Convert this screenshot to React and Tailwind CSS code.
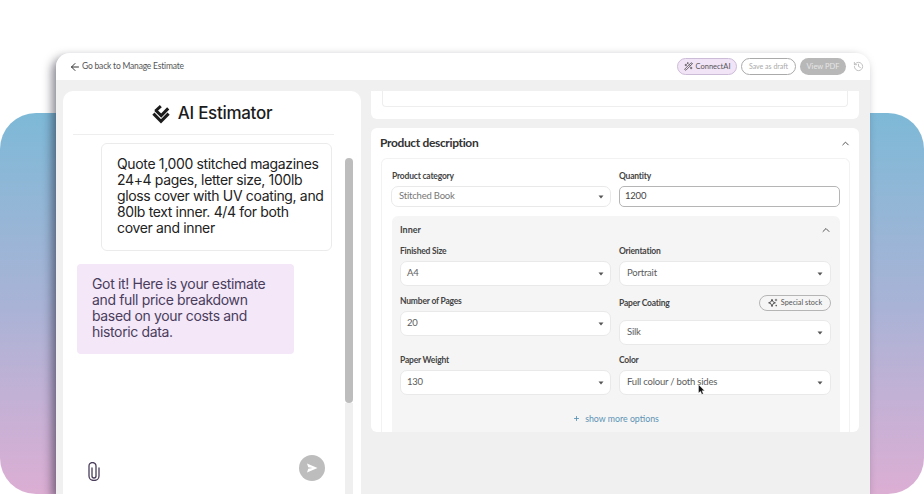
import React from "react";
import { ArrowLeft, ChevronUp, History, Plus, WandSparkles } from "lucide-react";

const Caret = () => (
  <svg width="6" height="4" viewBox="0 0 6 4" className="shrink-0">
    <path d="M0.5 0.5h5L3 3.5z" fill="#555" />
  </svg>
);

const Label = ({ children, className = "" }) => (
  <div className={`text-[8.5px] tracking-[-0.2px] leading-[11px] font-bold text-[#444] ${className}`}>{children}</div>
);

const Select = ({ value, className = "" }) => (
  <div className={`flex items-center justify-between bg-white rounded-[7px] border border-[#e9e9e9] text-[9.5px] tracking-[-0.2px] text-[#5c5c5c] ${className}`}>
    <span>{value}</span>
    <Caret />
  </div>
);

const Logo = () => (
  <svg width="20" height="20" viewBox="0 0 20 20" fill="none" stroke="#1c1c1c" strokeWidth="3">
    <path d="M2.4 9.6 10 17.4 17.6 9.6" />
    <path d="M4.4 7 9.8 2.2" />
    <path d="M4.4 6 10.2 11.6 17.2 4.4" />
  </svg>
);

const Sparkle = () => (
  <svg width="10" height="10" viewBox="0 0 10 10" fill="#555">
    <path d="M4 1.2 5 3.8 7.4 4.8 5 5.8 4 8.6 3 5.8 0.6 4.8 3 3.8z" fill="none" stroke="#555" strokeWidth="1" />
    <path d="M8 0.6 8.5 1.6 9.5 2 8.5 2.4 8 3.4 7.5 2.4 6.5 2 7.5 1.6z" />
    <circle cx="8.2" cy="7.6" r="0.8" />
  </svg>
);

const Clip = () => (
  <svg width="12" height="19" viewBox="0 0 12 19" fill="none" stroke="#4a3d5c" strokeWidth="1.3" strokeLinecap="round" className="mt-[8px]">
    <path d="M4 6V14a2 2 0 0 0 4 0V4a3.5 3.5 0 0 0-7 0V14a5 4.5 0 0 0 10 0V6" />
  </svg>
);

const Cursor = () => (
  <svg width="7" height="11" viewBox="0 0 7 11" className="absolute left-[698px] top-[384px]">
    <path d="M0.5 0.5v8.6l2-1.8 1.3 3 1.5-.6-1.3-2.9h2.6z" fill="#111" stroke="#fff" strokeWidth="0.4" />
  </svg>
);

export default function App() {
  return (
    <div className="relative w-[924px] h-[494px] overflow-hidden bg-white font-['Lato',sans-serif]">
      {/* gradient card behind the window */}
      <div className="absolute left-0 right-0 top-[113px] h-[381px] rounded-[36px] bg-gradient-to-b from-[#7db9d7] via-[#a8b3d6] to-[#dcaed4]" />

      {/* app window */}
      <div className="absolute left-[56px] top-[53px] w-[814px] h-[441px] rounded-t-[14px] bg-[#f0f0f0] overflow-hidden shadow-[-4px_4px_10px_rgba(20,20,40,0.5)] flex flex-col">
        <div className="h-[27px] bg-white flex items-center justify-between pl-[13px] pr-[6px] shrink-0">
          <div className="flex items-center gap-[1px] text-[8.5px] tracking-[-0.2px] text-[#555]">
            <ArrowLeft size={12} color="#333" strokeWidth={2} />
            <span>Go back to Manage Estimate</span>
          </div>
          <div className="flex items-center">
            <div className="w-[60px] h-[17px] rounded-full bg-[#f1e4f7] border border-[#cdbcd8] flex items-center justify-center gap-[3px] text-[7.5px] text-[#555]">
              <WandSparkles size={9} color="#444" />
              <span>ConnectAI</span>
            </div>
            <div className="ml-[4px] w-[55px] h-[17px] rounded-full border border-[#aaa] flex items-center justify-center text-[7px] text-[#aaa]">
              Save as draft
            </div>
            <div className="ml-[4px] w-[46px] h-[17px] rounded-full bg-[#b8b8b8] flex items-center justify-center text-[7.5px] text-[#e6e6e6]">
              View PDF
            </div>
            <History size={11} color="#bbb" className="ml-[7px]" />
          </div>
        </div>

        <div className="flex-1 flex gap-[10px] pl-[7px] pr-[11px] pt-[11px] min-h-0">
          {/* chat panel */}
          <div className="relative shrink-0 w-[298px] bg-white rounded-t-[10px] flex flex-col font-['Inter',sans-serif]">
            <div className="h-[44px] mx-[10px] w-[261px] pl-[16px] pt-[2px] border-b border-[#eee] flex items-center justify-center gap-[7px]">
              <Logo />
              <span className="text-[17px] font-medium text-[#1c1c1c] tracking-[-0.3px]">AI Estimator</span>
            </div>
            <div className="mt-[8px] ml-[38px] w-[231px] h-[108px] rounded-[6px] border border-[#ebebeb] pl-[15px] pr-[7px] pt-[12px] text-[14px] tracking-[-0.35px] leading-[16px] text-[#222]">
              Quote 1,000 stitched magazines 24+4 pages, letter size, 100lb gloss cover with UV coating, and 80lb text inner. 4/4 for both cover and inner
            </div>
            <div className="mt-[13px] ml-[14px] w-[217px] h-[90px] rounded-[4px] bg-[#f3e7f8] pl-[15px] pt-[12px] pr-[10px] text-[14px] tracking-[-0.35px] leading-[16px] text-[#4a3d5c]">
              Got it! Here is your estimate and full price breakdown based on your costs and historic data.
            </div>
            <div className="mt-auto mb-[13px] flex items-center justify-between pl-[25px] pr-[36px]">
              <Clip />
              <div className="w-[26px] h-[26px] rounded-full bg-[#bdbdbd] flex items-center justify-center">
                <svg width="12" height="10" viewBox="0 0 12 10">
                  <path d="M1 0.5 11.5 5 1 9.5 2.2 5.8 6.5 5 2.2 4.2z" fill="#fff" />
                </svg>
              </div>
            </div>
            {/* scrollbar */}
            <div className="absolute left-[282px] top-[67px] w-[8px] h-[245px] rounded-full bg-[#bdbdbd]" />
            <div className="absolute left-[282px] top-[312px] w-[8px] bottom-0 bg-[#efefef]" />
          </div>

          {/* form column */}
          <div className="flex-1 min-w-0 flex flex-col">
            <div className="h-[28px] bg-white rounded-b-[6px] px-[11px] shrink-0">
              <div className="h-[16px] border-x border-b border-[#eee] rounded-b-[4px]" />
            </div>
            <div className="mt-[9px] h-[304px] bg-white rounded-[6px] flex flex-col overflow-hidden">
              <div className="h-[30px] shrink-0 flex items-center justify-between pl-[9px] pr-[8px]">
                <span className="text-[12px] tracking-[-0.35px] font-bold text-[#333]">Product description</span>
                <ChevronUp size={11} color="#444" strokeWidth={2} />
              </div>
              <div className="flex-1 ml-[10px] w-[469px] border-x border-t border-[#f2f2f2] rounded-t-[6px] pl-[9px] pt-[12px] flex flex-col min-h-0">
                <div className="flex gap-[8px] shrink-0">
                  <div className="w-[220px]">
                    <Label className="pl-[1px]">Product category</Label>
                    <Select value="Stitched Book" className="mt-[4px] h-[21px] pl-[7px] pr-[6px] text-[#777]" />
                  </div>
                  <div className="w-[221px]">
                    <Label>Quantity</Label>
                    <div className="mt-[4px] h-[21px] rounded-[5px] border border-[#b5b5b5] pl-[5px] flex items-center text-[9.5px] tracking-[-0.2px] text-[#444]">1200</div>
                  </div>
                </div>
                <div className="mt-[9px] ml-[1px] w-[448px] flex-1 bg-[#f5f5f5] rounded-t-[6px] px-[8px] min-h-0">
                  <div className="h-[28px] flex items-center justify-between">
                    <span className="text-[9px] font-bold text-[#444]">Inner</span>
                    <ChevronUp size={12} color="#555" strokeWidth={2} />
                  </div>
                  <div className="flex gap-[8px]">
                    <div className="w-[211px]">
                      <Label className="mt-[2px]">Finished Size</Label>
                      <Select value="A4" className="mt-[4px] h-[25px] pl-[6px] pr-[6px]" />
                      <Label className="mt-[10px]">Number of Pages</Label>
                      <Select value="20" className="mt-[4px] h-[25px] pl-[6px] pr-[6px]" />
                      <Label className="mt-[19px]">Paper Weight</Label>
                      <Select value="130" className="mt-[4px] h-[25px] pl-[6px] pr-[6px]" />
                    </div>
                    <div className="w-[212px]">
                      <Label className="mt-[2px]">Orientation</Label>
                      <Select value="Portrait" className="mt-[4px] h-[25px] pl-[7px] pr-[7px]" />
                      <div className="mt-[9px] h-[16px] flex items-center justify-between">
                        <Label>Paper Coating</Label>
                        <div className="w-[72px] h-[16px] rounded-full border border-[#b5b5b5] flex items-center justify-center gap-[3px] text-[7.3px] text-[#555]">
                          <Sparkle />
                          <span>Special stock</span>
                        </div>
                      </div>
                      <Select value="Silk" className="mt-[9px] h-[25px] pl-[7px] pr-[7px]" />
                      <Label className="mt-[10px]">Color</Label>
                      <Select value="Full colour / both sides" className="mt-[4px] h-[25px] pl-[7px] pr-[7px]" />
                    </div>
                  </div>
                  <div className="mt-[17px] flex items-center justify-center gap-[5px] text-[8.8px] text-[#5c93b5]">
                    <Plus size={7} color="#5c93b5" strokeWidth={3} />
                    <span>show more options</span>
                  </div>
                </div>
              </div>
            </div>
          </div>
        </div>
      </div>
      <Cursor />
    </div>
  );
}
